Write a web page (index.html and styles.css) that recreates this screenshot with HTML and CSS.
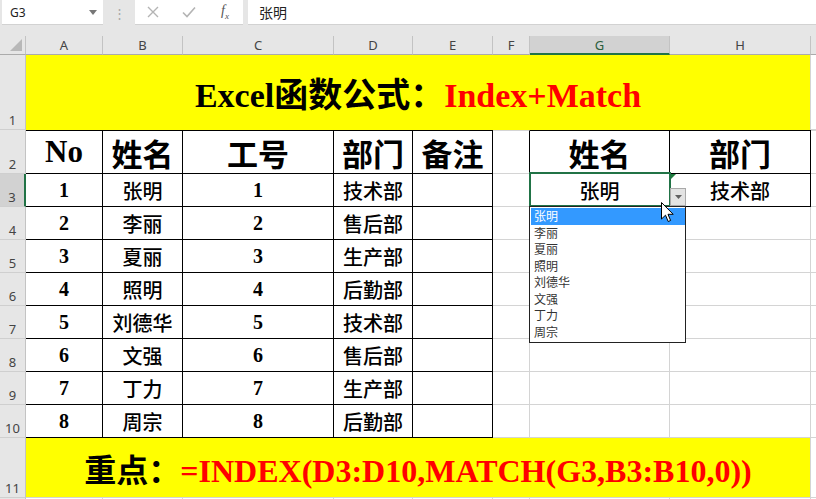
FILE: index.html
```html
<!DOCTYPE html>
<html>
<head>
<meta charset="utf-8">
<link rel="stylesheet" href="styles.css">
</head>
<body>
<div class="app">
  <div class="fbar">
    <div class="namebox"><span>G3</span><svg class="nbarrow" width="8" height="5" viewBox="0 0 8 5"><polygon points="0,0 8,0 4,5" fill="#777"/></svg></div>
    <div class="fsep">⋮</div>
    <div class="fbtns">
      <div class="fslot"><svg width="12" height="12" viewBox="0 0 12 12"><path d="M1 1 L11 11 M11 1 L1 11" stroke="#b4b4b4" stroke-width="1.4" fill="none"/></svg></div>
      <div class="fslot"><svg width="14" height="12" viewBox="0 0 14 12"><path d="M1 6.5 L5 10.5 L13 1.5" stroke="#b4b4b4" stroke-width="1.6" fill="none"/></svg></div>
      <div class="fslot"><span class="fx"><i>f</i><sub>x</sub></span></div>
    </div>
    <div class="finput">张明</div>
  </div>

  <div class="sheet">
    <!-- column headers -->
    <div class="c ch corner"><svg width="12" height="12" viewBox="0 0 12 12"><polygon points="12,0 12,12 0,12" fill="#b8b8b8"/></svg></div>
    <div class="c ch">A</div>
    <div class="c ch">B</div>
    <div class="c ch">C</div>
    <div class="c ch">D</div>
    <div class="c ch">E</div>
    <div class="c ch">F</div>
    <div class="c ch chsel">G</div>
    <div class="c ch">H</div>
    <div class="c ch"></div>

    <!-- row 1 -->
    <div class="c rh">1</div>
    <div class="c band band1"><span class="title">Excel函数公式：<span class="red">Index+Match</span></span></div>
    <div class="c"></div>

    <!-- row 2 -->
    <div class="c rh rh2">2</div>
    <div class="c t tt hd">No</div>
    <div class="c t tt hd">姓名</div>
    <div class="c t tt hd">工号</div>
    <div class="c t tt hd">部门</div>
    <div class="c t tt hd">备注</div>
    <div class="c gt lb"></div>
    <div class="c t tt hd">姓名</div>
    <div class="c t tt hd">部门</div>
    <div class="c gt"></div>

    <!-- row 3 -->
    <div class="c rh rhsel">3</div>
    <div class="c t num">1</div>
    <div class="c t nm">张明</div>
    <div class="c t num">1</div>
    <div class="c t nm">技术部</div>
    <div class="c t"></div>
    <div class="c lb"></div>
    <div class="c t nm g3">张明
      <div class="sel"></div>
      <div class="ddbtn"><svg width="7" height="4" viewBox="0 0 7 4"><polygon points="0,0 7,0 3.5,4" fill="#606060"/></svg></div>
      <div class="ddlist">
        <div class="ddi ddsel">张明</div>
        <div class="ddi">李丽</div>
        <div class="ddi">夏丽</div>
        <div class="ddi">照明</div>
        <div class="ddi">刘德华</div>
        <div class="ddi">文强</div>
        <div class="ddi">丁力</div>
        <div class="ddi">周宗</div>
      </div>
      <svg class="cursor" width="13" height="21" viewBox="0 0 13 21"><path d="M0.5 0.5 L0.5 17 L4.5 13.2 L7.2 19.5 L9.6 18.5 L7 12.3 L12.2 12.3 Z" fill="#fff" stroke="#000" stroke-width="1"/></svg>
    </div>
    <div class="c t nm h3">技术部<svg class="errtri" width="6" height="6" viewBox="0 0 6 6"><polygon points="0,0 6,0 0,6" fill="#1e7b3c"/></svg></div>
    <div class="c"></div>

    <!-- row 4 -->
    <div class="c rh">4</div>
    <div class="c t num">2</div>
    <div class="c t nm">李丽</div>
    <div class="c t num">2</div>
    <div class="c t nm">售后部</div>
    <div class="c t"></div>
    <div class="c"></div>
    <div class="c"></div>
    <div class="c"></div>
    <div class="c"></div>

    <!-- row 5 -->
    <div class="c rh">5</div>
    <div class="c t num">3</div>
    <div class="c t nm">夏丽</div>
    <div class="c t num">3</div>
    <div class="c t nm">生产部</div>
    <div class="c t"></div>
    <div class="c"></div>
    <div class="c"></div>
    <div class="c"></div>
    <div class="c"></div>

    <!-- row 6 -->
    <div class="c rh">6</div>
    <div class="c t num">4</div>
    <div class="c t nm">照明</div>
    <div class="c t num">4</div>
    <div class="c t nm">后勤部</div>
    <div class="c t"></div>
    <div class="c"></div>
    <div class="c"></div>
    <div class="c"></div>
    <div class="c"></div>

    <!-- row 7 -->
    <div class="c rh">7</div>
    <div class="c t num">5</div>
    <div class="c t nm">刘德华</div>
    <div class="c t num">5</div>
    <div class="c t nm">技术部</div>
    <div class="c t"></div>
    <div class="c"></div>
    <div class="c"></div>
    <div class="c"></div>
    <div class="c"></div>

    <!-- row 8 -->
    <div class="c rh">8</div>
    <div class="c t num">6</div>
    <div class="c t nm">文强</div>
    <div class="c t num">6</div>
    <div class="c t nm">售后部</div>
    <div class="c t"></div>
    <div class="c"></div>
    <div class="c"></div>
    <div class="c"></div>
    <div class="c"></div>

    <!-- row 9 -->
    <div class="c rh">9</div>
    <div class="c t num">7</div>
    <div class="c t nm">丁力</div>
    <div class="c t num">7</div>
    <div class="c t nm">生产部</div>
    <div class="c t"></div>
    <div class="c"></div>
    <div class="c"></div>
    <div class="c"></div>
    <div class="c"></div>

    <!-- row 10 -->
    <div class="c rh">10</div>
    <div class="c t num">8</div>
    <div class="c t nm">周宗</div>
    <div class="c t num">8</div>
    <div class="c t nm">后勤部</div>
    <div class="c t"></div>
    <div class="c"></div>
    <div class="c"></div>
    <div class="c"></div>
    <div class="c"></div>

    <!-- row 11 -->
    <div class="c rh">11</div>
    <div class="c band"><span class="formula">重点：<span class="red">=INDEX(D3:D10,MATCH(G3,B3:B10,0))</span></span></div>
    <div class="c"></div>

    <!-- row 12 -->
    <div class="c rh"></div>
    <div class="c"></div>
    <div class="c"></div>
    <div class="c"></div>
    <div class="c"></div>
    <div class="c"></div>
    <div class="c"></div>
    <div class="c"></div>
    <div class="c"></div>
    <div class="c"></div>
  </div>
</div>
</body>
</html>
```

FILE: styles.css
```css
* {
  box-sizing: border-box;
  margin: 0;
  padding: 0;
}

html, body {
  width: 816px;
  height: 499px;
  overflow: hidden;
  background: #fff;
}

body {
  font-family: "Noto Sans", "Noto Sans CJK SC", sans-serif;
  color: #000;
}

.app {
  width: 816px;
  height: 499px;
  overflow: hidden;
}

/* formula bar */
.fbar {
  height: 36px;
  background: #e6e6e6;
  display: flex;
  align-items: flex-start;
}

.namebox {
  margin-left: 2px;
  width: 101px;
  height: 25px;
  background: #fff;
  border-bottom: 1px solid #d2d2d2;
  display: flex;
  align-items: center;
  justify-content: space-between;
  padding: 0 6px 0 8px;
  font-size: 12px;
  color: #222;
}

.fsep {
  width: 32px;
  height: 25px;
  display: flex;
  align-items: center;
  justify-content: center;
  color: #a8a8a8;
  font-size: 13px;
}

.fbtns {
  width: 108px;
  height: 25px;
  background: #fff;
  border-bottom: 1px solid #d2d2d2;
  display: flex;
}

.fslot {
  width: 36px;
  height: 24px;
  display: flex;
  align-items: center;
  justify-content: center;
}

.fx {
  font-family: "Liberation Serif", serif;
  color: #555;
  font-size: 14px;
  line-height: 1;
}

.fx sub {
  font-size: 9px;
  font-style: italic;
}

.finput {
  margin-left: 5px;
  flex: 1;
  height: 25px;
  background: #fff;
  border-bottom: 1px solid #d2d2d2;
  padding-left: 11px;
  display: flex;
  align-items: center;
  font-family: "Noto Sans CJK SC", sans-serif;
  font-size: 14px;
  color: #222;
}

/* sheet grid */
.sheet {
  display: grid;
  grid-template-columns: 26px 77px 80px 151px 79px 80px 37px 140px 141px 40px;
  grid-template-rows: 19px 75px 44px repeat(8, 33px) 60px 40px;
}

.c {
  border-right: 1px solid #d4d4d4;
  border-bottom: 1px solid #d4d4d4;
  display: flex;
  align-items: center;
  justify-content: center;
  white-space: nowrap;
}

.ch {
  background: #e6e6e6;
  border-right-color: #c3c3c3;
  border-bottom-color: #ababab;
  font-size: 13px;
  color: #444;
}

.corner {
  justify-content: flex-end;
  align-items: flex-end;
  padding: 0 3px 3px 0;
}

.chsel {
  background: #d2d2d2;
  border-bottom: 2px solid #217346;
  color: #2a5e3c;
}

.rh {
  background: #e6e6e6;
  border-right-color: #c3c3c3;
  border-bottom-color: #cfcfcf;
  align-items: flex-end;
  font-size: 13px;
  line-height: 1;
  color: #444;
  padding-bottom: 2px;
}

.rhsel {
  background: #d2d2d2;
  border-right: 2px solid #217346;
}

/* yellow bands */
.band {
  grid-column: 2 / 10;
  background: #ffff00;
}

.band1 {
  border-bottom: none;
}

.title,
.formula {
  font-family: "Liberation Serif", "Noto Sans CJK SC", serif;
  font-weight: 700;
}

.title {
  font-size: 34px;
}

.formula {
  font-size: 32px;
}

.red {
  color: #ff0000;
}

/* table borders */
.t {
  border-right-color: #000;
  border-bottom-color: #000;
}

.tt {
  border-top: 1px solid #000;
}

.gt {
  border-top: 1px solid #d4d4d4;
}

.lb {
  border-right-color: #000;
}

.hd {
  font-family: "Liberation Serif", "Noto Sans CJK SC", serif;
  font-weight: 700;
  font-size: 31px;
}

.num {
  font-family: "Liberation Serif", serif;
  font-weight: 700;
  font-size: 20px;
}

.nm {
  font-family: "Noto Sans CJK SC", sans-serif;
  font-weight: 500;
  font-size: 20px;
}

/* selected cell & overlays */
.g3 {
  position: relative;
  z-index: 5;
}

.h3 {
  position: relative;
}

.errtri {
  position: absolute;
  left: 0;
  top: 0;
}

.sel {
  position: absolute;
  left: -1px;
  top: -2px;
  width: 142px;
  height: 35px;
  border: 2px solid #217346;
}

.ddbtn {
  position: absolute;
  left: 140px;
  top: 14px;
  width: 16px;
  height: 18px;
  background: #e3e3e3;
  border: 1px solid #a9a9a9;
  display: flex;
  align-items: center;
  justify-content: center;
}

.ddlist {
  position: absolute;
  left: -1px;
  top: 32px;
  width: 157px;
  height: 137px;
  background: #fff;
  border: 1px solid #222;
  padding: 1px 0 0 1px;
  display: flex;
  flex-direction: column;
}

.ddi {
  width: 154px;
  height: 16.5px;
  line-height: 16.5px;
  padding-left: 3px;
  font-family: "Noto Sans CJK SC", sans-serif;
  font-size: 12px;
  font-weight: 400;
  color: #333;
}

.ddsel {
  background: #3399ff;
  color: #fff;
}

.cursor {
  position: absolute;
  left: 131px;
  top: 28px;
}
```
